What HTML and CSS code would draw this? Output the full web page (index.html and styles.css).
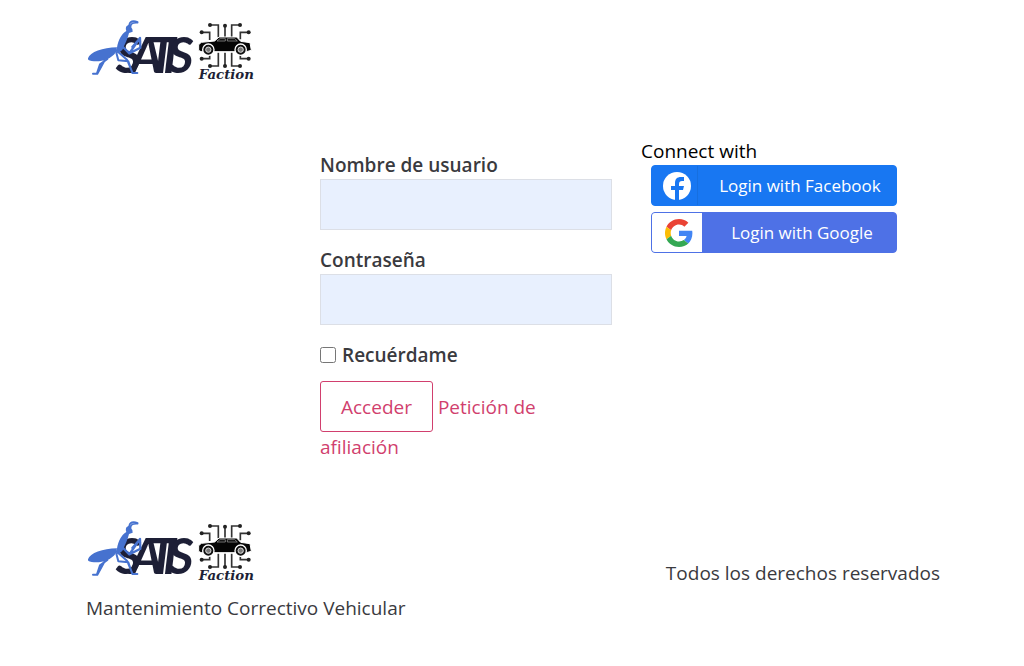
FILE: index.html
```
<!DOCTYPE html>
<html lang="es">
<head>
<meta charset="utf-8">
<meta name="viewport" content="width=device-width, initial-scale=1">
<title>SATIS Faction</title>
<link rel="stylesheet" href="styles.css">
</head>
<body>
<svg class="symbols" aria-hidden="true">
  <symbol id="logo" viewBox="18 24 516 192">
    <g class="logo-word">
      <text x="107" y="188">S</text>
      <text x="151" y="188">A</text>
      <text x="203" y="188">T</text>
      <text x="249" y="188">I</text>
      <text x="263" y="188">S</text>
    </g>
    <g fill="#4672cf">
      <path d="M24 145C30 126 68 113 111 112L108 126C91 151 61 156 35 153C26 152 23 149 24 145Z"/>
      <path d="M111 113C114 91 124 72 139 63C135 52 140 45 148 45L157 57L158 65L147 69C143 88 134 103 127 120L116 128L106 124Z"/>
    </g>
    <g fill="none" stroke="#4672cf" stroke-linejoin="round" stroke-linecap="round">
      <path stroke-width="5" d="M147 48C149 32 160 31 173 36M151 55C151 39 160 37 173 38"/>
      <path stroke-width="6" d="M74 151L52 191H39M82 147L60 163L51 190M109 128L115 151L145 154L157 189H172M112 124L141 149L157 187"/>
      <path stroke-width="7" d="M129 111L148 130L180 84M149 130L181 113L180 85L157 111"/>
    </g>
    <g fill="none" stroke="#333" stroke-width="5">
      <path d="M390 45H415V82M435 47V82M480 45H455V82M365 67H389V90M506 67H481V88M365 146H389V128M390 168H415V128M435 168V128M480 168H455V128M506 146H481V128"/>
    </g>
    <g fill="#222">
      <circle cx="390" cy="45" r="6"/><circle cx="435" cy="47" r="6"/><circle cx="480" cy="45" r="6"/>
      <circle cx="365" cy="67" r="6"/><circle cx="506" cy="67" r="6"/><circle cx="365" cy="146" r="6"/>
      <circle cx="506" cy="146" r="6"/><circle cx="390" cy="168" r="6"/><circle cx="435" cy="168" r="6"/><circle cx="480" cy="168" r="6"/>
    </g>
    <path fill="#050505" stroke="#fff" stroke-width="3" d="M356 121V104L364 97L404 93L417 81H470L482 94L510 98L514 121L499 125H363Z"/>
    <path fill="none" stroke="#aaa" stroke-width="2" d="M411 93L420 86H436V93ZM442 86H464L472 93H442Z"/>
    <g fill="#111" stroke="#fff" stroke-width="4">
      <circle cx="385" cy="119" r="17"/><circle cx="482" cy="119" r="17"/>
    </g>
    <g fill="#777" stroke="#ddd" stroke-width="3">
      <circle cx="385" cy="119" r="8"/><circle cx="482" cy="119" r="8"/>
    </g>
    <text class="logo-script" x="356" y="208">Faction</text>
  </symbol>
</svg>

<header class="header">
  <a class="logo-link" href="#" aria-label="SATIS Faction"><svg class="logo" aria-hidden="true"><use href="#logo"/></svg></a>
</header>

<main class="access">
  <form class="login">
    <div class="field">
      <label for="user">Nombre de usuario</label>
      <input class="text-input" id="user" type="text" autocomplete="username">
    </div>
    <div class="field">
      <label for="pass">Contraseña</label>
      <input class="text-input" id="pass" type="password" autocomplete="current-password">
    </div>
    <div class="remember">
      <input class="check" id="remember" type="checkbox">
      <label for="remember">Recuérdame</label>
    </div>
    <div class="actions"><button class="submit" type="submit">Acceder</button> <a href="#">Petición de afiliación</a></div>
  </form>
  <section class="social">
    <p class="social-title">Connect with</p>
    <button class="provider facebook" type="button">
      <span class="provider-icon">
        <svg width="28" height="28" viewBox="0 0 28 28" aria-hidden="true"><circle cx="14" cy="14" r="14" fill="#fff"/><path fill="#1877f2" d="M12 28V18H8V14H12V11C12 7 14 5 18 5L21 5V9H19C17 9 16 10 16 12V14H21L20 18H16V28Z"/></svg>
      </span>
      <span class="provider-label">Login with Facebook</span>
    </button>
    <button class="provider google" type="button">
      <span class="provider-icon">
        <svg width="28" height="28" viewBox="0 0 48 48" aria-hidden="true"><path fill="#ea4335" d="M24 9.5c3.54 0 6.71 1.22 9.21 3.6l6.85-6.85C35.9 2.38 30.47 0 24 0 14.62 0 6.51 5.38 2.56 13.22l7.98 6.19C12.43 13.72 17.74 9.5 24 9.5z"/><path fill="#4285f4" d="M46.98 24.55c0-1.57-.15-3.09-.38-4.55H24v9.02h12.94c-.58 2.96-2.26 5.48-4.78 7.18l7.73 6c4.51-4.18 7.09-10.36 7.09-17.65z"/><path fill="#fbbc05" d="M10.53 28.59c-.48-1.45-.76-2.99-.76-4.59s.27-3.14.76-4.59l-7.98-6.19C.92 16.46 0 20.12 0 24c0 3.88.92 7.54 2.56 10.78l7.97-6.19z"/><path fill="#34a853" d="M24 48c6.48 0 11.93-2.13 15.89-5.81l-7.73-6c-2.15 1.45-4.92 2.3-8.16 2.3-6.26 0-11.57-4.22-13.47-9.91l-7.98 6.19C6.51 42.62 14.62 48 24 48z"/></svg>
      </span>
      <span class="provider-label">Login with Google</span>
    </button>
  </section>
</main>

<footer class="footer">
  <div class="brand">
    <svg class="logo" role="img" aria-label="SATIS Faction"><use href="#logo"/></svg>
    <p>Mantenimiento Correctivo Vehicular</p>
  </div>
  <p class="rights">Todos los derechos reservados</p>
</footer>
</body>
</html>
```

FILE: styles.css
```
* { box-sizing: border-box; }

body {
  margin: 0;
  padding: 18px 84px 40px 86px;
  background: #fff;
  color: #3a3a3e;
  font-family: "Open Sans", "Noto Sans", sans-serif;
  font-size: 19px;
  line-height: 28px;
}

p { margin: 0; }
a { color: #d13f6e; text-decoration: none; }
button, input { font: inherit; }

.symbols { position: absolute; width: 0; height: 0; }
.logo { display: block; width: 172px; height: 64px; }
.logo-link { display: inline-block; }
.logo-word {
  fill: #1d1f36;
  font: italic 700 150px Lato, sans-serif;
}
.logo-script {
  fill: #1d1f36;
  font: italic 700 40px "DejaVu Serif", serif;
}

.header { display: flex; }

.access {
  display: grid;
  grid-template-columns: 292px 256px;
  justify-content: center;
  gap: 29px;
  padding: 55px 0 0 191px;
}

.login { padding-top: 14px; }
.login label { font-weight: 600; }
.field { display: flex; flex-direction: column; margin-bottom: 16px; }
.text-input {
  width: 100%;
  height: 51px;
  padding: 8px 16px;
  border: 1px solid #dcdfe6;
  background: #e8f0fe;
}
.remember { display: flex; align-items: center; gap: 6px; }
.check { width: 16px; height: 16px; margin: 0; }
.actions { padding-top: 12px; line-height: 30px; }
.submit {
  height: 51px;
  padding: 0 20px;
  border: 1px solid #d13f6e;
  border-radius: 3px;
  background: transparent;
  color: #d13f6e;
}

.social-title { color: #000; }
.provider {
  display: flex;
  width: 246px;
  height: 41px;
  margin: 0 0 6px 10px;
  padding: 0;
  overflow: hidden;
  border: 1px solid #1877f2;
  border-radius: 4px;
  color: #fff;
  font-size: 17px;
}
.provider-icon {
  display: flex;
  flex: 0 0 50px;
  align-items: center;
  justify-content: center;
  padding-left: 4px;
  height: 100%;
}
.provider-label {
  flex: 1;
  align-self: center;
  padding-left: 6px;
  text-align: center;
  white-space: nowrap;
}
.facebook { background: #1877f2; }
.facebook .provider-icon { flex-basis: 46px; border-right: 1px solid #166fe0; }
.google { border-color: #4e71e6; background: #4e71e6; }
.google .provider-icon { background: #fff; }

.footer {
  display: flex;
  align-items: center;
  justify-content: space-between;
  padding-top: 57px;
}
.brand p { padding-top: 11px; }
.rights { padding-top: 4px; }
```
